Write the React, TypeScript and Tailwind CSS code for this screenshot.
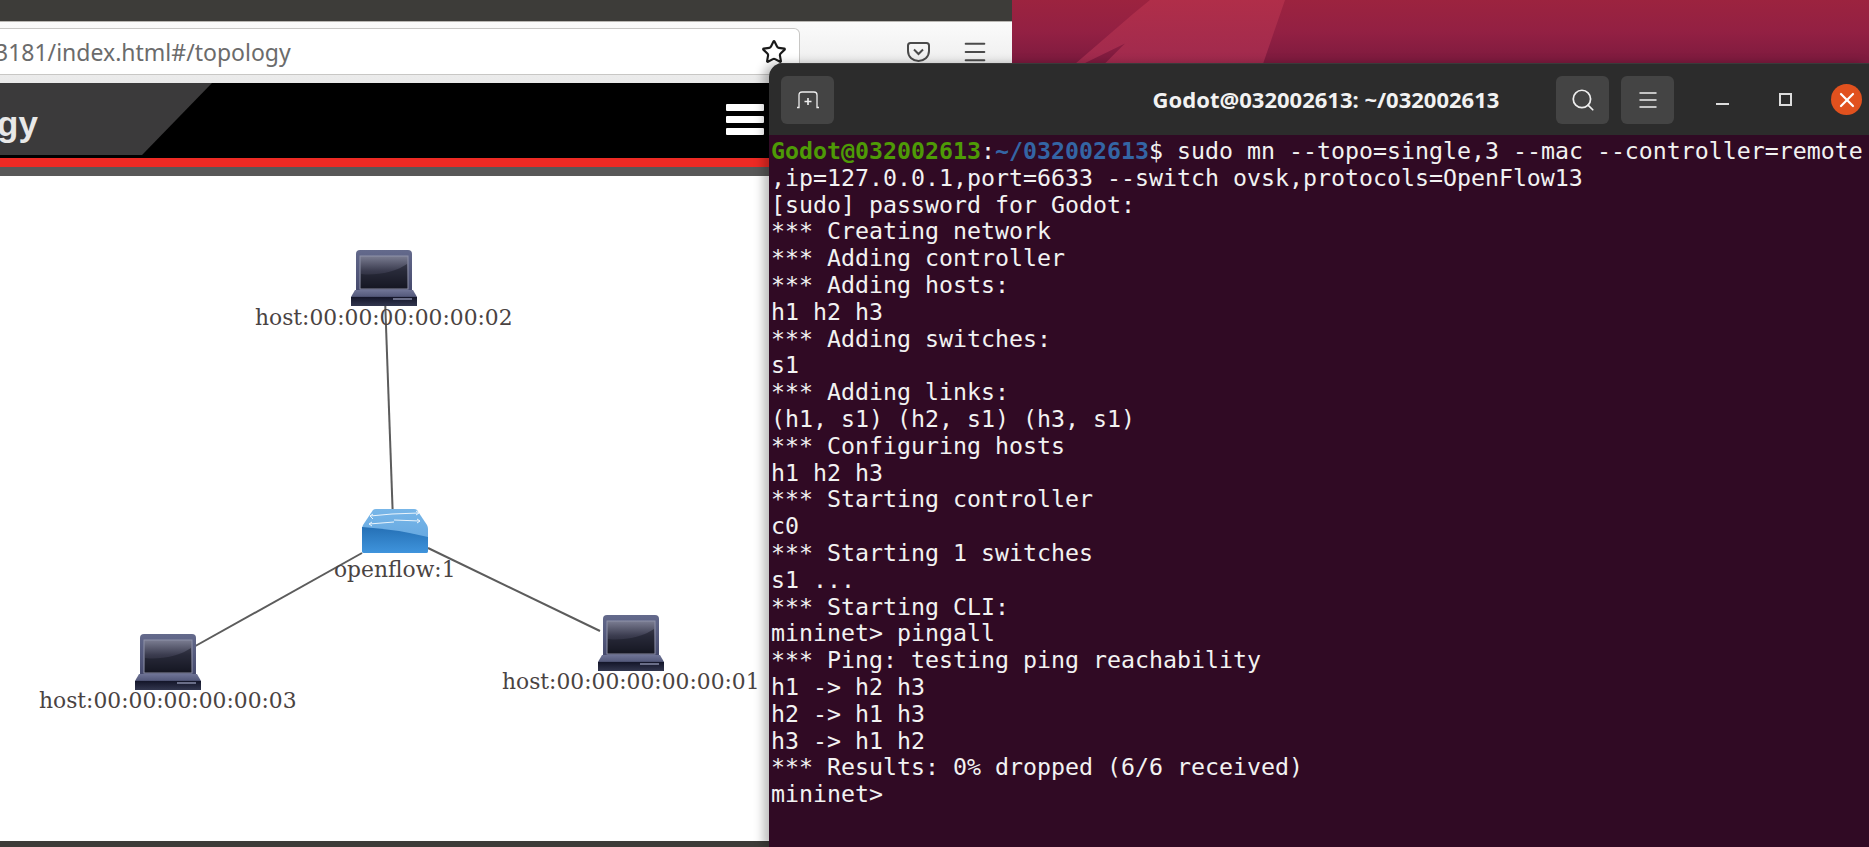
import { Menu, Search, Star, X } from 'lucide-react';

const termLines = [
  '[sudo] password for Godot:',
  '*** Creating network',
  '*** Adding controller',
  '*** Adding hosts:',
  'h1 h2 h3',
  '*** Adding switches:',
  's1',
  '*** Adding links:',
  '(h1, s1) (h2, s1) (h3, s1)',
  '*** Configuring hosts',
  'h1 h2 h3',
  '*** Starting controller',
  'c0',
  '*** Starting 1 switches',
  's1 ...',
  '*** Starting CLI:',
  'mininet> pingall',
  '*** Ping: testing ping reachability',
  'h1 -> h2 h3',
  'h2 -> h1 h3',
  'h3 -> h1 h2',
  '*** Results: 0% dropped (6/6 received)',
  'mininet>',
];

function HostIcon() {
  return (
    <svg width="66" height="56" viewBox="0 0 66 56">
      <defs>
        <linearGradient id="hostFrame" x1="0" y1="0" x2="0" y2="1">
          <stop offset="0" stopColor="#646a8c" />
          <stop offset="1" stopColor="#43476a" />
        </linearGradient>
        <linearGradient id="hostScreen" x1="0" y1="0" x2="0" y2="1">
          <stop offset="0" stopColor="#7b7d92" />
          <stop offset="0.45" stopColor="#3b3c4f" />
          <stop offset="1" stopColor="#0f101a" />
        </linearGradient>
        <linearGradient id="hostBase" x1="0" y1="0" x2="0" y2="1">
          <stop offset="0" stopColor="#6f7496" />
          <stop offset="0.4" stopColor="#555a7c" />
          <stop offset="0.45" stopColor="#14162a" />
          <stop offset="1" stopColor="#33374f" />
        </linearGradient>
      </defs>
      <rect x="5" y="0" width="56" height="44" rx="4" fill="url(#hostFrame)" />
      <rect x="9" y="6" width="48" height="33" fill="url(#hostScreen)" stroke="#8e91a8" strokeWidth="1" />
      <path d="M10 24C25 26 45 22 56 14V38H10Z" fill="#1a1b28" opacity="0.55" />
      <path d="M4 40H62L66 47V56H0V47Z" fill="url(#hostBase)" />
      <rect x="42" y="48" width="19" height="2" fill="#6a6e88" />
    </svg>
  );
}

function SwitchIcon() {
  return (
    <svg width="66" height="44" viewBox="0 0 66 44">
      <defs>
        <linearGradient id="switchTop" x1="0" y1="0" x2="0" y2="1">
          <stop offset="0" stopColor="#78b6e8" />
          <stop offset="1" stopColor="#5fa3de" />
        </linearGradient>
        <linearGradient id="switchFront" x1="0" y1="0" x2="0" y2="1">
          <stop offset="0" stopColor="#2570b5" />
          <stop offset="1" stopColor="#3f94dc" />
        </linearGradient>
      </defs>
      <path d="M11 1Q12 0 14 0H52Q54 0 55 1L65 16Q66 18 66 20V42Q66 44 64 44H2Q0 44 0 42V20Q0 18 1 16Z" fill="url(#switchTop)" />
      <path d="M0 18Q33 20 66 28V42Q66 44 64 44H2Q0 44 0 42Z" fill="url(#switchFront)" />
      <g stroke="#eaf4fc" strokeWidth="1" fill="none">
        <path d="M8 7L30 5M11 5L8 7L11 10" />
        <path d="M30 5L57 4M54 2L57 4L54 6" />
        <path d="M7 15L32 13M10 13L7 15L10 17" />
        <path d="M32 11L58 12M55 10L58 12L55 14" />
      </g>
    </svg>
  );
}

function TopoNode({ label, icon, className, labelClass }: { label: string; icon: React.ReactNode; className: string; labelClass: string }) {
  return (
    <div className={`absolute flex flex-col items-center ${className}`}>
      {icon}
      <span className={`whitespace-nowrap text-[21.8px] leading-[26px] text-[#4a4342] font-['DejaVu_Serif',serif] ${labelClass}`}>{label}</span>
    </div>
  );
}

function BrowserWindow() {
  return (
    <div className="absolute left-0 top-0 flex h-[847px] w-[1012px] flex-col overflow-hidden bg-white">
      <div className="h-[21px] bg-[#3d3c39]" />
      <div className="relative h-[62px] border-t border-[#b9b7b3] bg-gradient-to-b from-[#fbfbfb] to-[#e9e9e9]">
        <div className="mt-[6px] flex h-[47px] w-[800px] items-center rounded-r-md border border-l-0 border-[#c8c7c5] bg-white pr-3">
          <span className="-ml-[5px] flex-1 pt-[2px] text-[23px] text-[#6b6b6b] font-['Noto_Sans',sans-serif]">3181/index.html#/topology</span>
          <Star size={26} strokeWidth={2} className="text-[#1a1a1a]" />
        </div>
        <svg className="absolute left-[907px] top-[20px]" width="23" height="20" viewBox="0 0 23 20" fill="none" stroke="#4a4a4a" strokeWidth="2">
          <path d="M3.5 1H19.5Q22 1 22 3.5V9C22 15 17 19 11.5 19C6 19 1 15 1 9V3.5Q1 1 3.5 1Z" />
          <path d="M7 7.5L11.5 12L16 7.5" />
        </svg>
        <Menu size={28} strokeWidth={1.7} className="absolute left-[961px] top-[16px] text-[#4a4a4a]" />
      </div>
      <div className="relative flex h-[75px] items-center justify-end bg-black pr-[248px]">
        <div className="absolute left-0 top-0 h-[72px] w-[212px] bg-[#3b3a3b] [clip-path:polygon(0_0,100%_0,67%_100%,0_100%)]" />
        <span className="absolute left-0 top-[20px] -ml-[3px] text-[35px] font-bold leading-[42px] text-[#e8e8e8] font-['Liberation_Sans',sans-serif]">gy</span>
        <div className="relative -top-[1px] flex flex-col gap-[5px]">
          <div className="h-[7px] w-[38px] rounded-[1px] bg-white" />
          <div className="h-[7px] w-[38px] rounded-[1px] bg-white" />
          <div className="h-[7px] w-[38px] rounded-[1px] bg-white" />
        </div>
      </div>
      <div className="h-[9px] bg-[#ee2a24]" />
      <div className="h-[9px] bg-[#585858]" />
      <div className="relative flex-1 bg-white">
        <svg className="absolute inset-0" width="1012" height="665" fill="none" stroke="#5c5c5c" strokeWidth="2">
          <line x1="385" y1="122" x2="393" y2="345" />
          <line x1="362" y1="377" x2="190" y2="473" />
          <line x1="428" y1="372" x2="600" y2="455" />
        </svg>
        <TopoNode label="host:00:00:00:00:00:02" icon={<HostIcon />} labelClass="mt-[-1px]" className="left-[255px] top-[74px]" />
        <TopoNode label="openflow:1" icon={<SwitchIcon />} labelClass="mt-[4px]" className="left-[334px] top-[333px]" />
        <TopoNode label="host:00:00:00:00:00:03" icon={<HostIcon />} labelClass="mt-[-2px]" className="left-[39px] top-[458px]" />
        <TopoNode label="host:00:00:00:00:00:01" icon={<HostIcon />} labelClass="mt-[-2px]" className="left-[502px] top-[439px]" />
      </div>
      <div className="h-[6px] bg-[#3d3c39]" />
    </div>
  );
}

function HeaderButton({ children }: { children: React.ReactNode }) {
  return (
    <div className="flex h-[48px] w-[53px] items-center justify-center rounded-md bg-[#444444] text-[#eeeeee]">
      {children}
    </div>
  );
}

function TerminalWindow() {
  return (
    <div className="absolute left-[769px] top-[63px] flex h-[784px] w-[1100px] flex-col overflow-hidden rounded-tl-[14px] shadow-[-6px_0_10px_rgba(0,0,0,0.25)]">
      <div className="grid h-[72px] grid-cols-[1fr_auto_1fr] items-center border-t border-[#3a3a3a] bg-[#2c2c2c] pl-[12px] pr-[7px]">
        <HeaderButton>
          <svg width="24" height="20" viewBox="0 0 24 20" fill="none" stroke="#eeeeee" strokeWidth="1.3">
            <path d="M1 17.5H3V5Q3 2 6 2H18Q21 2 21 5V17.5H23" />
            <path d="M12 8V15M8.5 11.5H15.5" strokeWidth="1.6" />
          </svg>
        </HeaderButton>
        <div className="ml-[9px] text-[22px] font-bold text-[#f2f2f2] font-['Noto_Sans',sans-serif]">Godot@032002613: ~/032002613</div>
        <div className="flex items-center justify-end">
          <div className="flex items-center gap-[12px]">
            <HeaderButton><Search size={26} strokeWidth={1.6} /></HeaderButton>
            <HeaderButton><Menu size={24} strokeWidth={1.5} /></HeaderButton>
          </div>
          <div className="ml-[42px] mt-[8px] h-[2px] w-[13px] bg-[#dddddd]" />
          <div className="ml-[50px] h-[13px] w-[13px] border-2 border-[#dddddd]" />
          <div className="ml-[39px] flex h-[31px] w-[31px] items-center justify-center rounded-full bg-[#e1511e] text-white">
            <X size={24} strokeWidth={2.2} />
          </div>
        </div>
      </div>
      <div className="flex-1 bg-[#300a24] pl-[2px] pt-[3px] text-[23.25px] leading-[26.8px] whitespace-pre text-[#f2f2f2] font-['DejaVu_Sans_Mono',monospace]">
        <div>
          <span className="font-bold text-[#4e9a06]">Godot@032002613</span>
          <span>:</span>
          <span className="font-bold text-[#3465a4]">~/032002613</span>
          <span>$ sudo mn --topo=single,3 --mac --controller=remote</span>
        </div>
        <div>,ip=127.0.0.1,port=6633 --switch ovsk,protocols=OpenFlow13</div>
        {termLines.map((line, i) => (
          <div key={i}>{line}</div>
        ))}
      </div>
    </div>
  );
}

export default function App() {
  return (
    <div className="relative h-[847px] w-[1869px] overflow-hidden bg-[#8f1f40]">
      <div className="absolute left-[1012px] top-0 h-[64px] w-[857px] bg-gradient-to-b from-[#9c233f] via-[#932043] to-[#7c1a3e]" />
      <div className="absolute left-[1075px] top-0 h-[64px] w-[210px] bg-gradient-to-b from-[#b02e49] to-[#a02a4e] [clip-path:polygon(35.7%_0,100%_0,89.5%_100%,14%_100%,23.8%_68%,3.8%_100%,0_100%,27.6%_22%)]" />
      <BrowserWindow />
      <TerminalWindow />
    </div>
  );
}
